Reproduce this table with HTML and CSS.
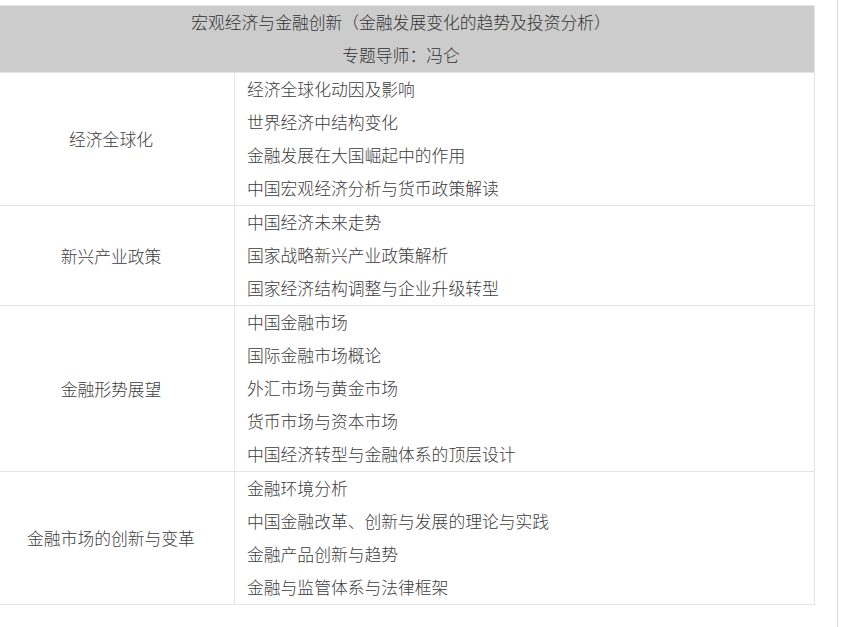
FILE: index.html
```html
<!DOCTYPE html>
<html lang="zh">
<head>
<meta charset="utf-8">
<title>宏观经济与金融创新</title>
<link rel="stylesheet" href="styles.css">
</head>
<body>
<div class="page">
  <table class="course">
    <colgroup>
      <col class="col-topic">
      <col class="col-items">
    </colgroup>
    <thead>
      <tr>
        <th colspan="2" class="head">
          <div class="line">宏观经济与金融创新（金融发展变化的趋势及投资分析）</div>
          <div class="line">专题导师：冯仑</div>
        </th>
      </tr>
    </thead>
    <tbody>
      <tr>
        <td class="topic">经济全球化</td>
        <td class="items">
          <div class="line">经济全球化动因及影响</div>
          <div class="line">世界经济中结构变化</div>
          <div class="line">金融发展在大国崛起中的作用</div>
          <div class="line">中国宏观经济分析与货币政策解读</div>
        </td>
      </tr>
      <tr>
        <td class="topic">新兴产业政策</td>
        <td class="items">
          <div class="line">中国经济未来走势</div>
          <div class="line">国家战略新兴产业政策解析</div>
          <div class="line">国家经济结构调整与企业升级转型</div>
        </td>
      </tr>
      <tr>
        <td class="topic">金融形势展望</td>
        <td class="items">
          <div class="line">中国金融市场</div>
          <div class="line">国际金融市场概论</div>
          <div class="line">外汇市场与黄金市场</div>
          <div class="line">货币市场与资本市场</div>
          <div class="line">中国经济转型与金融体系的顶层设计</div>
        </td>
      </tr>
      <tr>
        <td class="topic">金融市场的创新与变革</td>
        <td class="items">
          <div class="line">金融环境分析</div>
          <div class="line">中国金融改革、创新与发展的理论与实践</div>
          <div class="line">金融产品创新与趋势</div>
          <div class="line">金融与监管体系与法律框架</div>
        </td>
      </tr>
    </tbody>
  </table>
</div>
</body>
</html>
```
FILE: styles.css
```css
html, body {
  margin: 0;
  padding: 0;
  background: #fff;
}
body {
  font-family: "Noto Sans CJK SC", "Noto Sans", sans-serif;
  font-size: 16.8px;
  font-weight: 300;
  color: #3c3c3c;
  overflow: hidden;
}
.page {
  width: 838px;
  height: 627px;
  border-right: 1px solid #dcdcdc;
  padding-top: 5px;
  box-sizing: border-box;
}
.course {
  border-collapse: collapse;
  table-layout: fixed;
  width: 827px;
  margin-left: -13px;
}
.col-topic { width: 247px; }
.col-items { width: 580px; }
.course th,
.course td {
  border: 1px solid #e4e4e4;
  padding: 0;
}
.head {
  background: #cccccc;
  font-weight: 300;
  text-align: center;
  color: #333;
}
.line {
  line-height: 33px;
  height: 33px;
  white-space: nowrap;
}
.topic {
  text-align: center;
  vertical-align: middle;
}
.items {
  padding: 0 0 0 12px !important;
  text-align: left;
}
```
